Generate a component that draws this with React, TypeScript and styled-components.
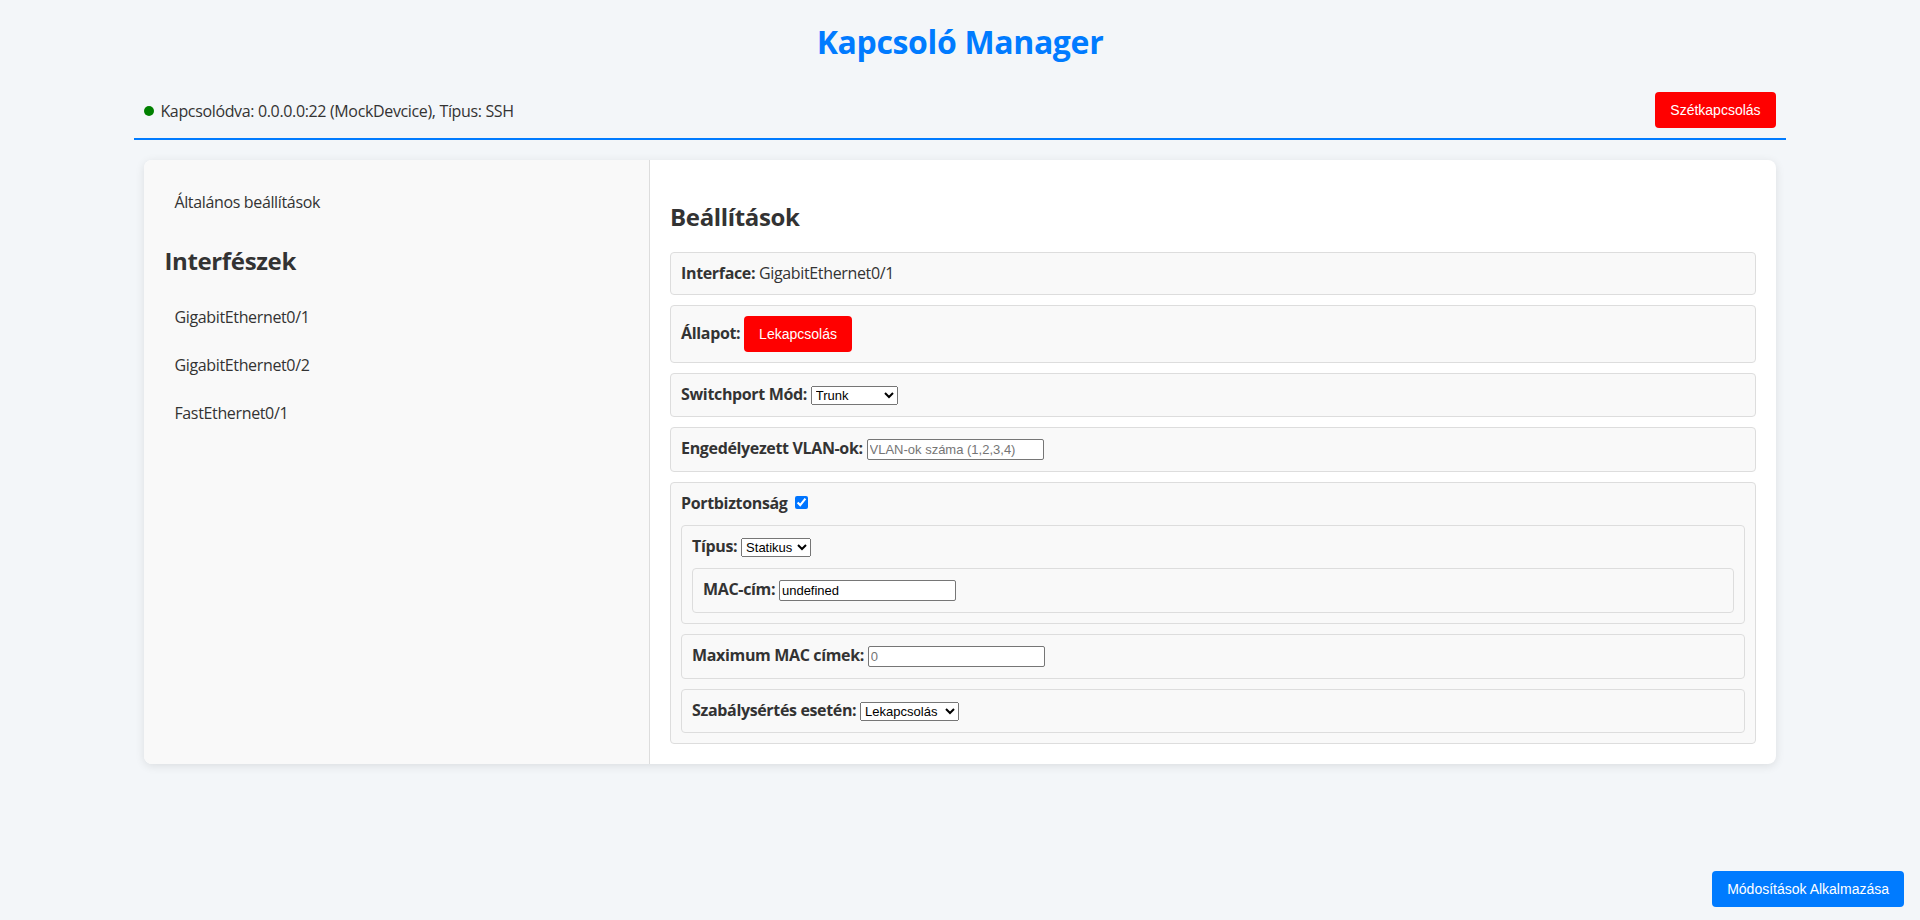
import styled, { createGlobalStyle } from "styled-components";

const GlobalStyle = createGlobalStyle`
  body {
    margin: 0;
    background-color: #f3f6f9;
    font-family: "Open Sans", "Noto Sans", sans-serif;
    letter-spacing: -0.35px;
    line-height: 1.33;
    color: #333;
  }
`;

const interfaces = ["GigabitEthernet0/1", "GigabitEthernet0/2", "FastEthernet0/1"];

export default function App() {
  return (
    <>
      <GlobalStyle />
      <Page>
        <Title>Kapcsoló Manager</Title>
        <Header>
          <Status>
            <Dot />
            Kapcsolódva: 0.0.0.0:22 (MockDevcice), Típus: SSH
          </Status>
          <ActionButton $color="#ff0000">Szétkapcsolás</ActionButton>
        </Header>

        <Card>
          <Sidebar>
            <NavItem>Általános beállítások</NavItem>
            <SidebarTitle>Interfészek</SidebarTitle>
            {interfaces.map((name) => (
              <NavItem key={name}>{name}</NavItem>
            ))}
          </Sidebar>

          <Content>
            <SectionTitle>Beállítások</SectionTitle>
            <Stack>
              <Field>
                <Row>
                  <Label>Interface:</Label> GigabitEthernet0/1
                </Row>
              </Field>
              <Field>
                <Row>
                  <Label>Állapot:</Label> <ActionButton $color="#ff0000">Lekapcsolás</ActionButton>
                </Row>
              </Field>
              <Field>
                <Row>
                  <Label>Switchport Mód:</Label>{" "}
                  <Select $width={87} defaultValue="trunk">
                    <option value="access">Access</option>
                    <option value="trunk">Trunk</option>
                  </Select>
                </Row>
              </Field>
              <Field>
                <Row>
                  <Label>Engedélyezett VLAN-ok:</Label> <TextInput placeholder="VLAN-ok száma (1,2,3,4)" />
                </Row>
              </Field>
              <Field>
                <Row>
                  <Label>Portbiztonság</Label> <Check type="checkbox" defaultChecked />
                </Row>
                <Field>
                  <Row>
                    <Label>Típus:</Label>{" "}
                    <Select $width={70} defaultValue="static">
                      <option value="static">Statikus</option>
                      <option value="sticky">Sticky</option>
                    </Select>
                  </Row>
                  <Field>
                    <Row>
                      <Label>MAC-cím:</Label> <TextInput defaultValue="undefined" />
                    </Row>
                  </Field>
                </Field>
                <Field>
                  <Row>
                    <Label>Maximum MAC címek:</Label> <TextInput placeholder="0" />
                  </Row>
                </Field>
                <Field>
                  <Row>
                    <Label>Szabálysértés esetén:</Label>{" "}
                    <Select $width={99} defaultValue="shutdown">
                      <option value="shutdown">Lekapcsolás</option>
                      <option value="restrict">Korlátozás</option>
                      <option value="protect">Védelem</option>
                    </Select>
                  </Row>
                </Field>
              </Field>
            </Stack>
          </Content>
        </Card>
      </Page>
      <ApplyButton>Módosítások Alkalmazása</ApplyButton>
    </>
  );
}

const Page = styled.div`
  width: 86%;
  margin: 0 auto;
`;

const Title = styled.h1`
  margin: 21px 0 19px;
  text-align: center;
  font-size: 32px;
  line-height: 42px;
  font-weight: 700;
  color: #007bff;
`;

const Header = styled.div`
  display: flex;
  justify-content: space-between;
  align-items: center;
  padding: 10px;
  border-bottom: 2px solid #007bff;
`;

const Status = styled.div`
  display: flex;
  align-items: center;
  gap: 6px;
  margin-top: 3px;
  font-size: 16px;
  color: #333;
`;

const Dot = styled.span`
  width: 10px;
  height: 10px;
  border-radius: 50%;
  background-color: #008000;
`;

const ActionButton = styled.button<{ $color: string }>`
  padding: 10px 15px;
  border: none;
  border-radius: 4px;
  background-color: ${(p) => p.$color};
  color: #fff;
  font-family: "Liberation Sans", Arial, sans-serif;
  font-size: 14px;
  line-height: 16px;
  letter-spacing: 0;
  cursor: pointer;
`;

const ApplyButton = styled(ActionButton).attrs({ $color: "#007bff" })`
  position: fixed;
  right: 16px;
  bottom: 13px;
`;

const Card = styled.div`
  display: flex;
  margin: 20px 10px;
  background-color: #fff;
  border-radius: 8px;
  box-shadow: 0 2px 10px rgba(0, 0, 0, 0.1);
  overflow: hidden;
`;

const Sidebar = styled.div`
  flex: 0 0 31%;
  box-sizing: border-box;
  padding: 18px 20px 20px;
  background-color: #f9f9f9;
  border-right: 1px solid #ddd;
`;

const NavItem = styled.div`
  padding: 12px 10px;
  font-size: 16px;
  line-height: 24px;
  color: #333;
  cursor: pointer;
`;

const SidebarTitle = styled.h2`
  margin: 19px 0 16px;
  font-size: 24px;
  line-height: 32px;
  font-weight: 700;
  color: #333;
`;

const Content = styled.div`
  flex: 1;
  padding: 20px;
`;

const SectionTitle = styled.h2`
  margin: 21px 0 19px;
  font-size: 24px;
  line-height: 32px;
  font-weight: 700;
  color: #333;
`;

const Stack = styled.div`
  display: flex;
  flex-direction: column;
  gap: 10px;
`;

const Field = styled.div`
  display: flex;
  flex-direction: column;
  gap: 10px;
  padding: 10px;
  background-color: #f9f9f9;
  border: 1px solid #ddd;
  border-radius: 4px;
`;

const Row = styled.div`
  font-size: 16px;
  color: #333;
`;

const Label = styled.span`
  font-weight: 700;
`;

const Select = styled.select<{ $width: number }>`
  width: ${(p) => p.$width}px;
  height: 19px;
  margin: 1px 0;
  font-family: "Liberation Sans", Arial, sans-serif;
  font-size: 13px;
  letter-spacing: 0;
`;

const TextInput = styled.input.attrs({ type: "text" })`
  box-sizing: border-box;
  width: 177px;
  height: 21px;
  margin: 1px 0;
  padding: 1px 2px;
  border: 1px solid #767676;
  border-radius: 2px;
  font-family: "Liberation Sans", Arial, sans-serif;
  font-size: 13px;
  letter-spacing: 0;
  color: #000;

  &::placeholder {
    color: #757575;
  }
`;

const Check = styled.input`
  margin: 3px 3px 3px 4px;
  width: 13px;
  height: 13px;
`;
